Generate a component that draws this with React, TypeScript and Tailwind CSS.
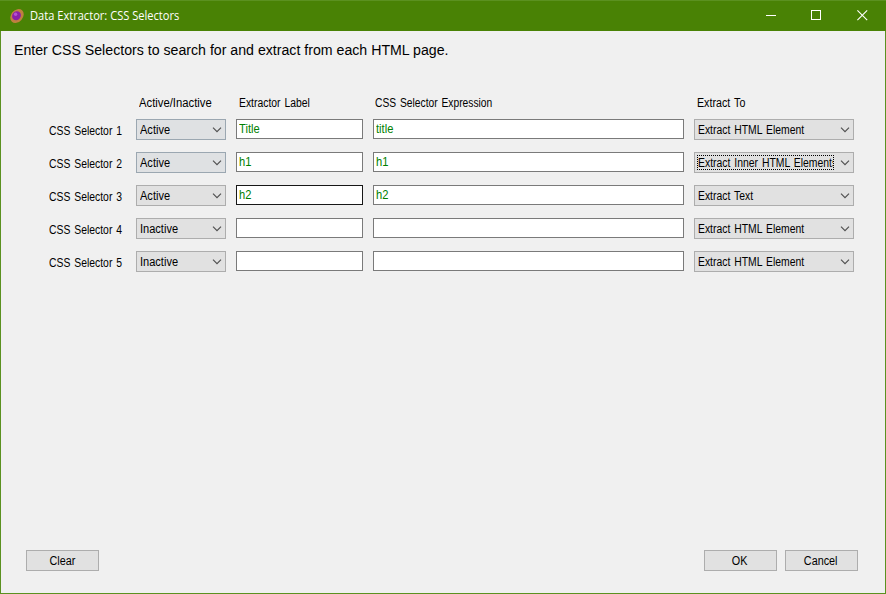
import React from "react";

type Row = {
  state: string;
  label: string;
  expression: string;
  extract: string;
  comboStyle: string;
  labelBorder: string;
  focused?: boolean;
};

const plainCombo = "border-[#adadad] bg-[#e1e1e1]";
const tintedCombo = "border-[#9ba7b1] bg-[#dfe1e3]";

const rows: Row[] = [
  { state: "Active", label: "Title", expression: "title", extract: "Extract HTML Element", comboStyle: tintedCombo, labelBorder: "border-[#7a7a7a]" },
  { state: "Active", label: "h1", expression: "h1", extract: "Extract Inner HTML Element", comboStyle: tintedCombo, labelBorder: "border-[#7a7a7a]", focused: true },
  { state: "Active", label: "h2", expression: "h2", extract: "Extract Text", comboStyle: plainCombo, labelBorder: "border-[#171717]" },
  { state: "Inactive", label: "", expression: "", extract: "Extract HTML Element", comboStyle: plainCombo, labelBorder: "border-[#7a7a7a]" },
  { state: "Inactive", label: "", expression: "", extract: "Extract HTML Element", comboStyle: plainCombo, labelBorder: "border-[#7a7a7a]" },
];

function Label({
  children,
  className = "",
  scale = "scale-x-[0.865]",
}: {
  children: React.ReactNode;
  className?: string;
  scale?: string;
}) {
  return (
    <span className={`block origin-left whitespace-nowrap [word-spacing:1.2px] ${scale} ${className}`}>{children}</span>
  );
}

function Combo({ text, className, focused, scale }: { text: string; className: string; focused?: boolean; scale?: string }) {
  return (
    <div className={`flex h-[21px] justify-between border ${className}`}>
      {focused ? (
        <div className="ml-[2px] mt-[2px] h-[15px] w-[137px] overflow-hidden border border-dotted border-black leading-[14px]">
          <Label scale="scale-x-[0.867]">{text}s</Label>
        </div>
      ) : (
        <Label scale={scale} className="ml-[3px] leading-[20px]">{text}</Label>
      )}
      <svg className="mr-[3px] mt-[7px] h-[6px] w-[10px] shrink-0" viewBox="0 0 10 6" fill="none" stroke="#505050" strokeWidth="1.15">
        <path d="M1 .7 5 4.7 9 .7" />
      </svg>
    </div>
  );
}

function Field({ text, className }: { text: string; className: string }) {
  return (
    <div className={`h-[20px] border bg-white pl-[2px] leading-[18px] text-[#008000] ${className}`}>
      <Label scale="scale-x-[0.93]">{text}</Label>
    </div>
  );
}

function Button({ children }: { children: string }) {
  return (
    <button className="flex h-[21px] w-[73px] items-center justify-center border border-[#adadad] bg-[#e1e1e1] pr-[1px] pt-[2px] leading-[19px]">
      <span className="block scale-x-[0.9]">{children}</span>
    </button>
  );
}

export default function App() {
  return (
    <div className="flex h-[594px] w-[886px] flex-col border border-t-0 border-[#5b9120] bg-[#f0f0f0] font-['Liberation_Sans',Arial,sans-serif] text-[12px] text-black">
      <header className="-mx-px flex h-[31px] shrink-0 items-center border-t border-[#5b9120] bg-[#498205] text-white">
        <svg className="ml-[10px] h-[14px] w-[14px]" viewBox="0 0 14 14">
          <ellipse cx="7" cy="7" rx="7.6" ry="5.9" transform="rotate(-48 7 7)" fill="#c08040" />
          <ellipse cx="6.8" cy="6.5" rx="4.7" ry="4.2" transform="rotate(-48 7 7)" fill="#8c20a8" />
          <circle cx="5.6" cy="5.2" r="1.7" fill="#b552d0" />
        </svg>
        <h1 className="ml-[6px] origin-left scale-x-[0.925] whitespace-nowrap font-['Open_Sans','Noto_Sans',sans-serif] text-[12px] font-normal">
          Data Extractor: CSS Selectors
        </h1>
        <div className="ml-auto mr-[18px] flex items-center gap-[35px] pb-px">
          <svg className="ml-px h-[11px] w-[11px]" viewBox="0 0 11 11" shapeRendering="crispEdges"><path d="M1 5.5H11" stroke="white" /></svg>
          <svg className="h-[11px] w-[11px]" viewBox="0 0 11 11" shapeRendering="crispEdges"><path d="M.5 .5H9.5V9.5H.5Z" fill="none" stroke="white" /></svg>
          <svg className="h-[11px] w-[11px]" viewBox="0 0 11 11"><path d="M.4.4 10.2 10.2M10.2.4.4 10.2" stroke="white" strokeWidth="1.1" /></svg>
        </div>
      </header>

      <p className="ml-[13px] mt-[10px] h-[18px] origin-left scale-x-[1.011] self-start whitespace-nowrap text-[14px] leading-[18px]">
        Enter CSS Selectors to search for and extract from each HTML page.
      </p>

      <main className="mt-[36px] pl-[48px]">
        <div className="grid h-[24px] grid-cols-[77px_90px_127px_311px_160px] gap-x-[10px] leading-[16px]">
          <span />
          <Label scale="scale-x-[0.94]" className="ml-[3px]">Active/Inactive</Label>
          <Label className="ml-[3px]">Extractor Label</Label>
          <Label scale="scale-x-[0.855]" className="ml-[2px]">CSS Selector Expression</Label>
          <Label scale="scale-x-[0.89]" className="ml-[3px]">Extract To</Label>
        </div>
        {rows.map((row, i) => (
          <div key={i} className="grid h-[33px] grid-cols-[77px_90px_127px_311px_160px] gap-x-[10px]">
            <Label scale="scale-x-[0.865]" className="leading-[25px]">CSS Selector {i + 1}</Label>
            <Combo text={row.state} className={row.comboStyle} scale="scale-x-[0.92]" />
            <Field text={row.label} className={row.labelBorder} />
            <Field text={row.expression} className="border-[#7a7a7a]" />
            <Combo text={row.extract} className={plainCombo} focused={row.focused} />
          </div>
        ))}
      </main>

      <footer className="mb-[22px] ml-[25px] mr-[27px] mt-auto flex justify-between">
        <Button>Clear</Button>
        <div className="flex gap-2">
          <Button>OK</Button>
          <Button>Cancel</Button>
        </div>
      </footer>
    </div>
  );
}
